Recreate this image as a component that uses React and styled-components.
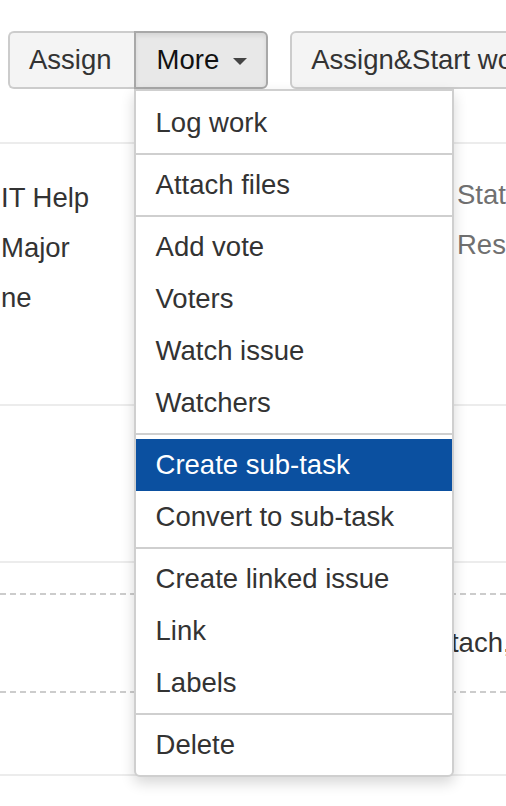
import React from "react";
import styled, { createGlobalStyle } from "styled-components";

const Global = createGlobalStyle`
  html, body { margin: 0; padding: 0; background: #fff; }
  body {
    font-family: "Liberation Sans", Arial, Helvetica, sans-serif;
    color: #333;
    overflow: hidden;
  }
`;

const Page = styled.div`
  width: 506px;
  height: 806px;
  overflow: hidden;
  display: flex;
  flex-direction: column;
  font-size: 27.5px;
  position: relative;
`;

const Toolbar = styled.div`
  display: flex;
  align-items: flex-start;
  gap: 22px;
  padding: 31px 0 0 8px;
  white-space: nowrap;
  position: relative;
  z-index: 2;
`;

const ButtonGroup = styled.div`
  display: flex;
  flex-shrink: 0;
`;

const DropWrap = styled.div`
  position: relative;
  display: flex;
`;

const Button = styled.button`
  font-family: inherit;
  font-size: 27.5px;
  height: 58px;
  line-height: 54px;
  margin: 0;
  padding: ${(p) => p.$pad || "0 21px"};
  display: flex;
  align-items: center;
  gap: 14px;
  flex-shrink: 0;
  cursor: pointer;
  background: ${(p) => (p.$active ? "#e8e8e8" : "#f4f4f4")};
  color: ${(p) => (p.$active ? "#111" : "#333")};
  border: 2px solid ${(p) => (p.$active ? "#a8a8a8" : "#cccccc")};
  border-right-width: ${(p) => (p.$joinRight ? "0" : "2px")};
  border-radius: ${(p) => p.$radius || "6px"};
  box-shadow: ${(p) =>
    p.$active ? "inset 0 3px 4px rgba(0,0,0,0.08)" : "none"};
`;

const Caret = styled.span`
  width: 0;
  height: 0;
  border-left: 7px solid transparent;
  border-right: 7px solid transparent;
  border-top: 7px solid #444;
  margin-top: 2px;
`;

const Menu = styled.div`
  position: absolute;
  top: 100%;
  left: 0;
  width: 320px;
  box-sizing: border-box;
  padding-top: 2px;
  background: #fff;
  border: 2px solid #cfcfcf;
  border-radius: 0 0 6px 6px;
  box-shadow: 0 6px 14px rgba(0, 0, 0, 0.16);
  z-index: 5;
`;

const MenuGroup = styled.div`
  padding: 4px 0;
  & + & {
    border-top: 2px solid #cfcfcf;
  }
`;

const MenuItem = styled.div`
  height: 52px;
  line-height: 52px;
  padding: 0 20px;
  white-space: nowrap;
  font-size: 27.5px;
  background: ${(p) => (p.$selected ? "#0b50a0" : "transparent")};
  color: ${(p) => (p.$selected ? "#fff" : "#333")};
`;

const Rule = styled.div`
  border-top: 2px solid #ececec;
  margin-top: ${(p) => p.$top || 0}px;
  flex-shrink: 0;
`;

const DashRule = styled.div`
  border-top: 2px dashed #cccccc;
  flex-shrink: 0;
`;

const Details = styled.div`
  height: 260px;
  display: flex;
  justify-content: space-between;
  flex-shrink: 0;
  white-space: nowrap;
`;

const ValueCol = styled.div`
  display: flex;
  flex-direction: column;
  padding: 29px 0 0 1px;
`;

const LabelCol = styled.div`
  display: flex;
  flex-direction: column;
  padding-top: 26px;
  width: 49px;
  overflow: hidden;
`;

const Line = styled.div`
  line-height: 50px;
  height: 50px;
  color: ${(p) => p.$color || "#333"};
`;

const Blank = styled.div`
  height: ${(p) => p.$h}px;
  flex-shrink: 0;
`;

const LinkSection = styled.div`
  padding-top: 30px;
  flex-shrink: 0;
`;

const LinkRow = styled.div`
  height: 96px;
  line-height: 96px;
  padding-left: 425px;
  white-space: nowrap;
  color: #333;
`;

const groups = [
  ["Log work"],
  ["Attach files"],
  ["Add vote", "Voters", "Watch issue", "Watchers"],
  ["Create sub-task", "Convert to sub-task"],
  ["Create linked issue", "Link", "Labels"],
  ["Delete"],
];

export default function App() {
  return (
    <Page>
      <Global />
      <Toolbar>
        <ButtonGroup>
          <Button $joinRight $radius="6px 0 0 6px" $pad="0 22px 0 19px">
            Assign
          </Button>
          <DropWrap>
            <Button $active $radius="0 6px 6px 0" $pad="0 19px 0 21px">
              More
              <Caret />
            </Button>
            <Menu>
              {groups.map((g, i) => (
                <MenuGroup key={i}>
                  {g.map((item) => (
                    <MenuItem key={item} $selected={item === "Create sub-task"}>
                      {item}
                    </MenuItem>
                  ))}
                </MenuGroup>
              ))}
            </Menu>
          </DropWrap>
        </ButtonGroup>
        <Button $pad="0 21px 0 19px">Assign&amp;Start work</Button>
      </Toolbar>
      <Rule $top={53} />
      <Details>
        <ValueCol>
          <Line>IT Help</Line>
          <Line>Major</Line>
          <Line>ne</Line>
        </ValueCol>
        <LabelCol>
          <Line $color="#707070">Status:</Line>
          <Line $color="#707070">Resolution:</Line>
        </LabelCol>
      </Details>
      <Rule />
      <Blank $h={155} />
      <Rule />
      <LinkSection>
        <DashRule />
        <LinkRow>Attach, screenshot</LinkRow>
        <DashRule />
      </LinkSection>
      <Blank $h={81} />
      <Rule />
    </Page>
  );
}
